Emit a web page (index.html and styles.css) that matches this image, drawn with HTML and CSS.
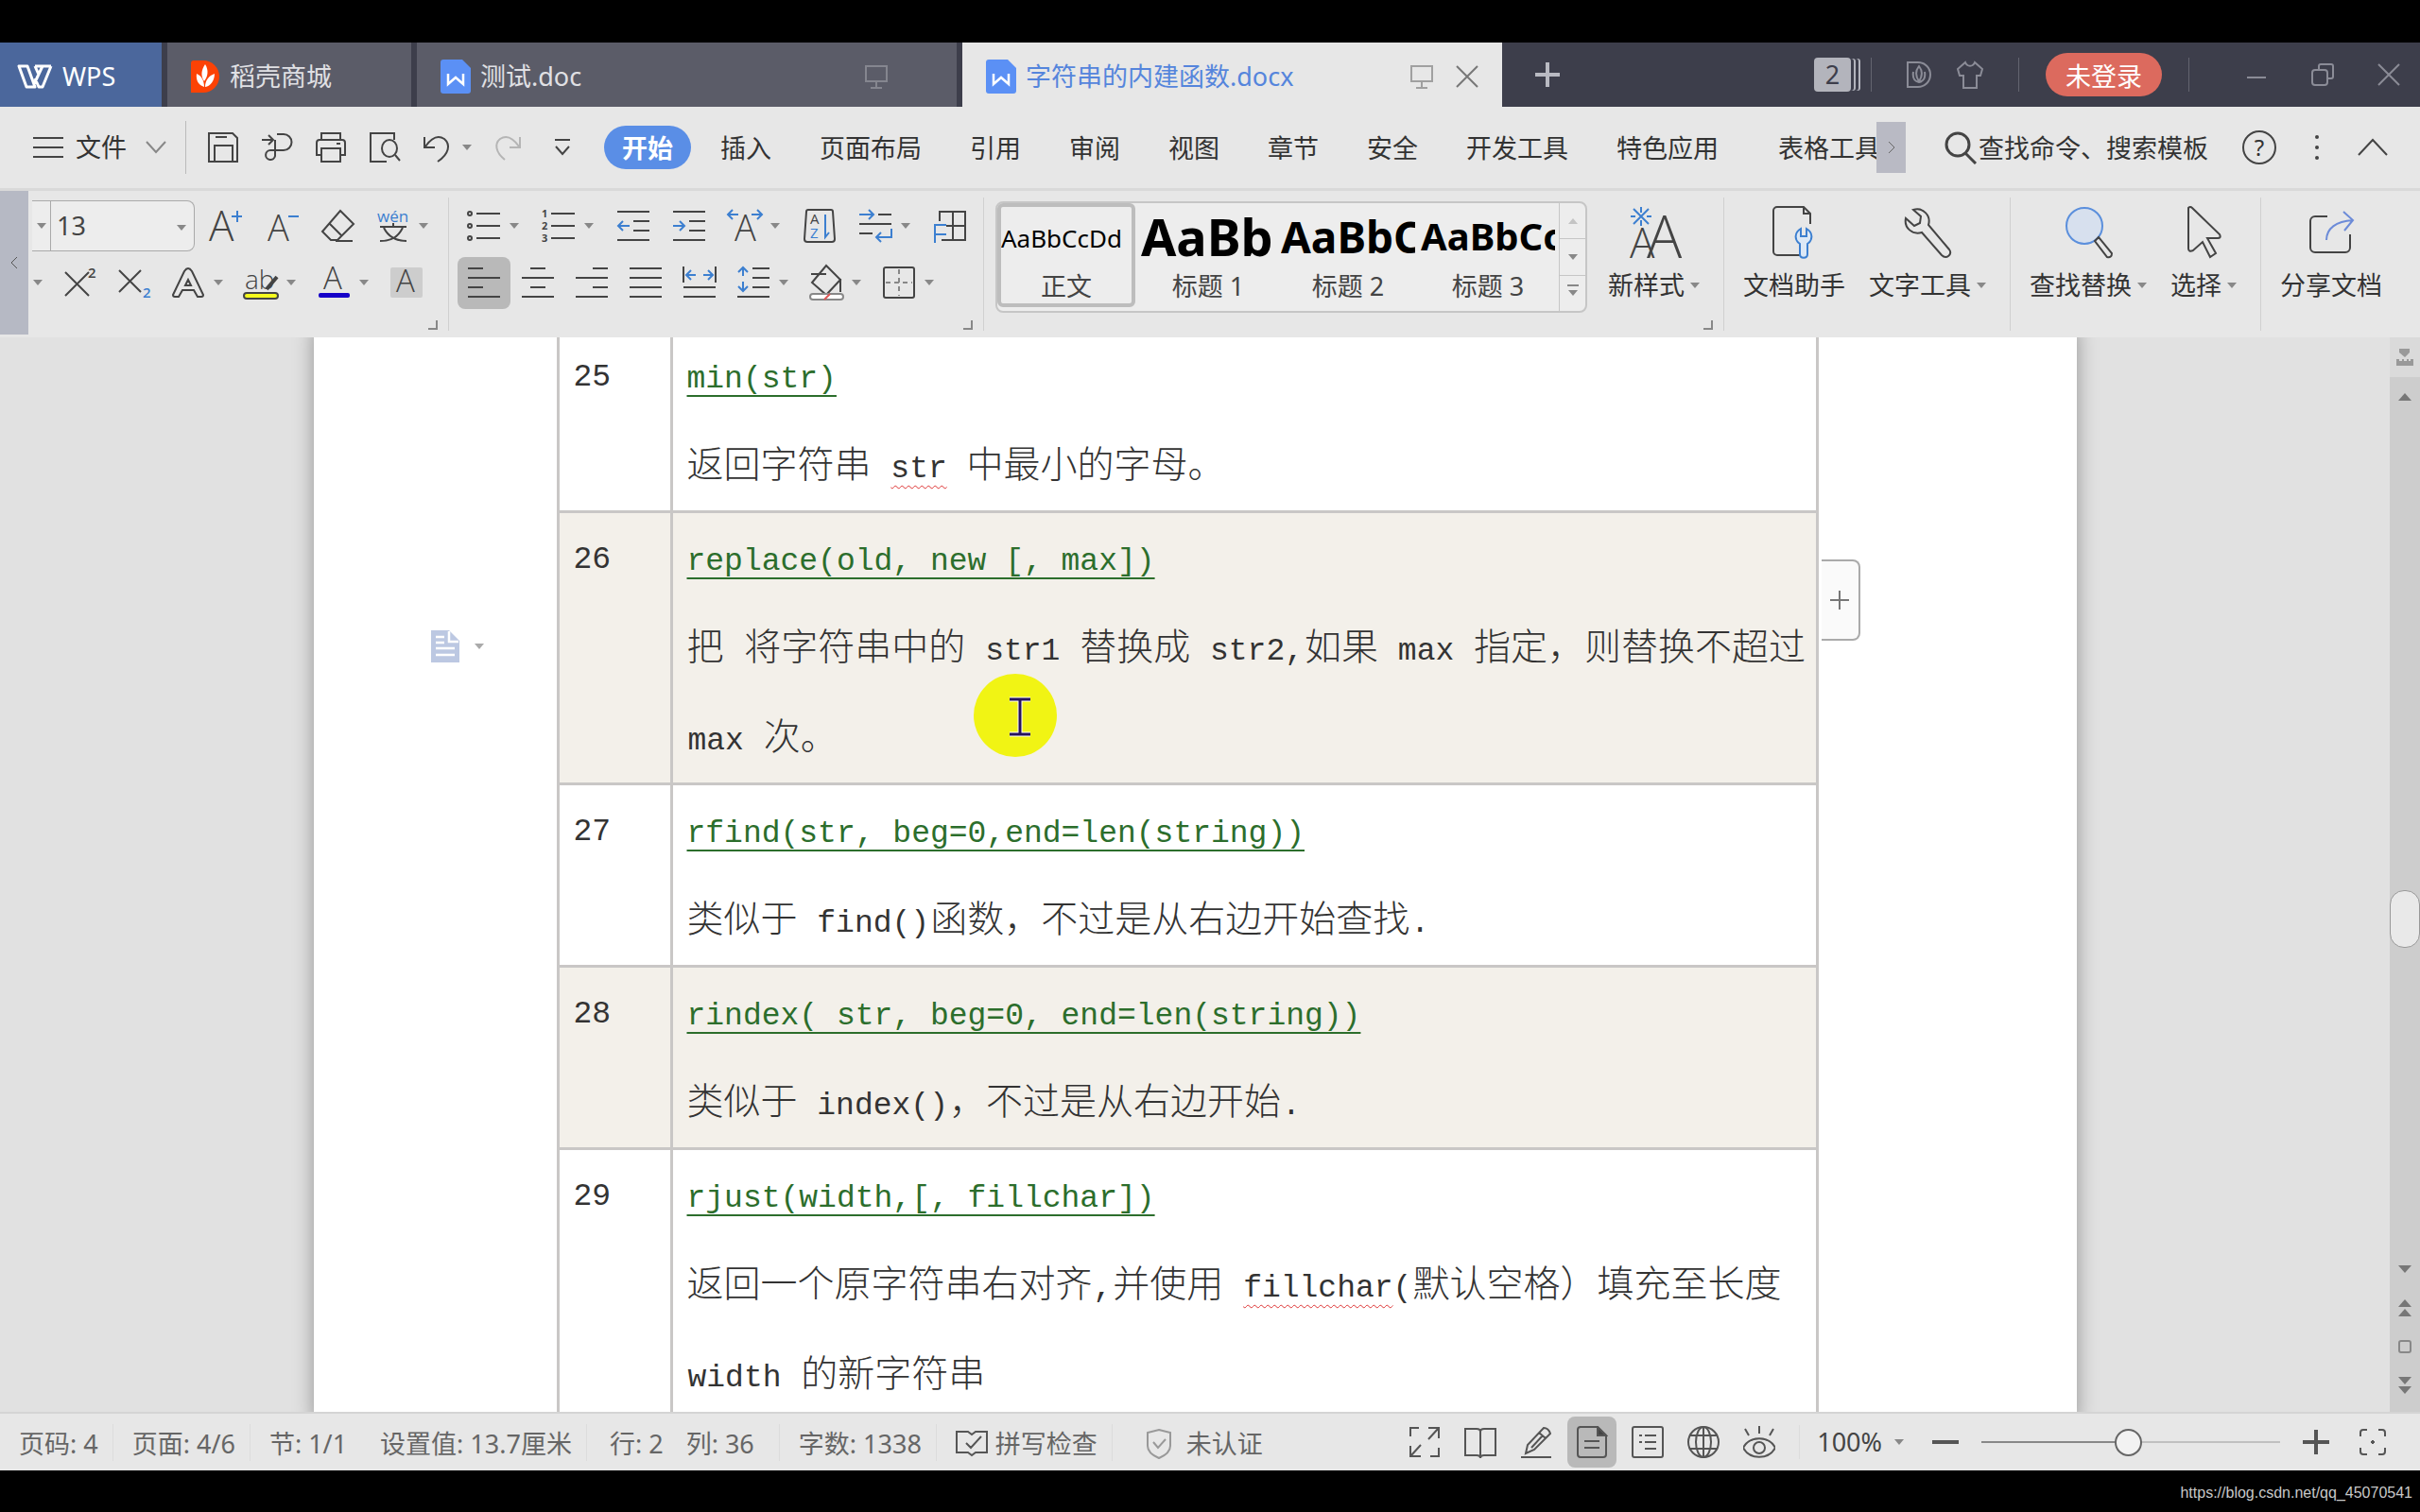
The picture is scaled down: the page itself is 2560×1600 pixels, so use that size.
FILE: index.html
```html
<!DOCTYPE html>
<html lang="zh-CN">
<head>
  <meta charset="UTF-8">
  <title>字符串的内建函数.docx - WPS</title>
  <meta name="viewport" content="width=device-width, initial-scale=1.0">
  <link rel="stylesheet" href="styles.css">
</head>
<body>
  <!-- Shared icons -->
  <svg class="defs" width="0" height="0" aria-hidden="true">
    <symbol id="i-doc" viewBox="0 0 32 36">
      <path d="M3 0h20l9 9v24a3 3 0 0 1-3 3H3a3 3 0 0 1-3-3V3a3 3 0 0 1 3-3z" fill="#5b90f5"/>
      <path d="M8 15v11l8-7 8 7V15" fill="none" stroke="#fff" stroke-width="2.5"/>
    </symbol>
    <symbol id="i-screen" viewBox="0 0 26 26">
      <path d="M2 2h22v16H2zM13 18v6M7 25h12" fill="none" stroke="currentColor" stroke-width="2"/>
    </symbol>
    <symbol id="i-close" viewBox="0 0 26 26">
      <path d="M2 2l22 22M24 2L2 24" fill="none" stroke="currentColor" stroke-width="2"/>
    </symbol>
    <symbol id="i-corner" viewBox="0 0 12 12">
      <path d="M1 10h9V1" fill="none" stroke="#888" stroke-width="2"/>
    </symbol>
  </svg>

  <!-- Title bar -->
  <header class="titlebar">
    <button class="tab tab-home">
      <svg width="38" height="26" viewBox="0 0 38 26"><path d="M2 2h9l8 22h-9zM36 2h-9l-9 19M36 2l-9 22h-4l-4-9M19 2h8M19 2l4 9" fill="none" stroke="#fff" stroke-width="3" stroke-linejoin="round"/></svg>
      WPS
    </button>
    <button class="tab tab-store">
      <svg width="31" height="36" viewBox="0 0 31 36"><path d="M0 4a3 3 0 0 1 3-3h10a17 17 0 0 1 0 34H0z" fill="#fc4205"/><path d="M15 5c4 6 3 13-1 18-4-6-3-12 1-18zM6 15c5 2 8 7 8 14-6-2-9-7-8-14zM25 15c0 7-4 13-10 14 0-7 4-12 10-14z" fill="#fff"/></svg>
      稻壳商城
    </button>
    <button class="tab tab-file">
      <svg width="32" height="36"><use href="#i-doc"/></svg>
      测试.doc
      <svg class="screen" width="26" height="26"><use href="#i-screen"/></svg>
    </button>
    <button class="tab tab-file active">
      <svg width="32" height="36"><use href="#i-doc"/></svg>
      字符串的内建函数.docx
      <svg class="screen" width="26" height="26"><use href="#i-screen"/></svg>
      <svg class="tab-close" width="26" height="26"><use href="#i-close"/></svg>
    </button>
    <button class="new-tab" aria-label="新建"><svg width="28" height="28" viewBox="0 0 28 28"><path d="M14 1v26M1 14h26" stroke="#b9bac2" stroke-width="4"/></svg></button>

    <div class="title-right">
      <button class="count">2</button>
      <i class="bar"></i>
      <div class="title-icons">
        <button aria-label="稻壳"><svg width="30" height="30" viewBox="0 0 30 30" fill="none" stroke="#8b8c97" stroke-width="2"><path d="M3 2h11a13 13 0 0 1 0 26H3z"/><path d="M15 6c4 5 4 10 0 16-4-6-4-11 0-16zM9 12c-1 6 1 10 6 11 5-1 7-5 6-11"/></svg></button>
        <button aria-label="皮肤"><svg width="30" height="30" viewBox="0 0 30 30" fill="none" stroke="#8b8c97" stroke-width="2"><path d="M10 2c2 5 8 5 10 0l8 7-2 7h-4v13H8V16H4L2 9z"/></svg></button>
      </div>
      <i class="bar"></i>
      <button class="login">未登录</button>
      <i class="bar"></i>
      <div class="window-controls">
        <button aria-label="最小化"><svg width="26" height="26" viewBox="0 0 26 26"><path d="M3 16h20" stroke="#8b8c97" stroke-width="2"/></svg></button>
        <button aria-label="还原"><svg width="26" height="26" viewBox="0 0 26 26" fill="none" stroke="#8b8c97" stroke-width="2"><rect x="2" y="8" width="16" height="16" rx="3"/><path d="M9 8V4a2 2 0 0 1 2-2h11a2 2 0 0 1 2 2v11a2 2 0 0 1-2 2h-4"/></svg></button>
        <button aria-label="关闭"><svg width="26" height="26"><use href="#i-close"/></svg></button>
      </div>
    </div>
  </header>

  <!-- Menu bar -->
  <nav class="menubar">
    <button class="file-menu">
      <svg width="34" height="26" viewBox="0 0 34 26"><path d="M1 3h32M1 13h32M1 23h32" stroke="#444" stroke-width="2"/></svg>
      文件
      <svg class="chev" width="22" height="14" viewBox="0 0 22 14"><path d="M1 1l10 11L21 1" fill="none" stroke="#888" stroke-width="2"/></svg>
    </button>
    <div class="quick">
      <button aria-label="保存"><svg width="34" height="34" viewBox="0 0 34 34"><path d="M2 2h25l5 5v25H2zM9 6h12M8 32V15h19v17"/></svg></button>
      <button aria-label="输出为PDF"><svg width="34" height="34" viewBox="0 0 34 34"><path d="M1 9h12M8 4l5 5-5 5M17 3h7a7 7 0 0 1 0 17H10a5 5 0 1 0 5 6V9"/></svg></button>
      <button aria-label="打印"><svg width="34" height="34" viewBox="0 0 34 34"><path d="M7 9V2h20v7M7 25H2V12a3 3 0 0 1 3-3h24a3 3 0 0 1 3 3v13h-5M7 18h20v14H7zM23 13h4"/></svg></button>
      <button aria-label="打印预览"><svg width="34" height="34" viewBox="0 0 34 34"><path d="M27 9V2H2v30h17M28 25l5 6"/><ellipse cx="22" cy="18" rx="8" ry="9"/></svg></button>
      <button class="with-caret" aria-label="撤销"><svg width="30" height="34" viewBox="0 0 30 34"><path d="M2 6v11h11M3 16C10 6 17 4 23 8c7 6 5 16-7 24"/></svg><span class="caret"></span></button>
      <button class="redo" aria-label="恢复"><svg width="30" height="34" viewBox="0 0 30 34"><path d="M28 6v11H17M27 16C20 6 13 4 7 8c-6 5-5 14 5 22"/></svg></button>
      <button class="more" aria-label="自定义"><svg width="20" height="20" viewBox="0 0 20 20"><path d="M2 2h16M3 9l7 8 7-8"/></svg></button>
    </div>
    <div class="menus">
      <button class="current">开始</button>
      <button>插入</button>
      <button>页面布局</button>
      <button>引用</button>
      <button>审阅</button>
      <button>视图</button>
      <button>章节</button>
      <button>安全</button>
      <button>开发工具</button>
      <button>特色应用</button>
      <button class="cut">表格工具</button>
    </div>
    <button class="menu-scroll" aria-label="更多"><svg width="8" height="14" viewBox="0 0 8 14"><path d="M1 1l6 6-6 6" fill="none" stroke="#666"/></svg></button>
    <label class="search">
      <svg width="36" height="36" viewBox="0 0 36 36"><circle cx="14" cy="15" r="12" fill="none" stroke="#444" stroke-width="3"/><path d="M22 24l11 11" stroke="#444" stroke-width="3"/></svg>
      <input type="text" placeholder="查找命令、搜索模板" aria-label="查找命令、搜索模板">
    </label>
    <div class="menu-end">
      <button class="help" aria-label="帮助">?</button>
      <button aria-label="更多选项"><svg width="8" height="30" viewBox="0 0 8 30" fill="#444"><circle cx="4" cy="4" r="2"/><circle cx="4" cy="15" r="2"/><circle cx="4" cy="26" r="2"/></svg></button>
      <button aria-label="折叠功能区"><svg width="32" height="20" viewBox="0 0 32 20"><path d="M1 18L16 2l15 16" fill="none" stroke="#444" stroke-width="2"/></svg></button>
    </div>
  </nav>

  <!-- Ribbon -->
  <section class="ribbon">
    <button class="ribbon-scroll" aria-label="向左"><svg width="8" height="14" viewBox="0 0 8 14"><path d="M7 1L1 7l6 6" fill="none" stroke="#555"/></svg></button>

    <div class="group font-group">
      <div class="tools-row">
        <div class="combo">
          <button class="combo-tail" aria-label="字体"><span class="caret"></span></button>
          <select aria-label="字号"><option>13</option></select>
          <span class="caret"></span>
        </div>
        <button class="tool" aria-label="增大字号"><svg viewBox="0 0 36 36"><text x="0" y="34" class="a-big">A</text><path class="blue" d="M24 8h11M30 2v12"/></svg></button>
        <button class="tool" aria-label="减小字号"><svg viewBox="0 0 36 36"><text x="3" y="34" class="a-mid">A</text><path class="blue" d="M25 8h11"/></svg></button>
        <button class="tool" aria-label="清除格式"><svg viewBox="0 0 36 36"><path d="M21 2l14 14-17 17h-7l-9-9zM9 15l14 14M16 34h18"/></svg></button>
        <button class="tool split" aria-label="拼音指南"><svg viewBox="0 0 36 36"><text x="1" y="14" class="wen">wén</text><path d="M4 19h28M18 15v4M8 20c5 10 13 14 24 14M28 20C23 30 16 34 4 34"/></svg><span class="caret"></span></button>
      </div>
      <div class="tools-row tight">
        <span class="caret lone"></span>
        <button class="tool" aria-label="上标"><svg viewBox="0 0 36 36"><path d="M2 7l25 25M27 7L2 32"/><text x="26" y="13" class="num">2</text></svg></button>
        <button class="tool" aria-label="下标"><svg viewBox="0 0 36 36"><path d="M2 5l23 23M25 5L2 28"/><text x="27" y="34" class="num blue-t">2</text></svg></button>
        <button class="tool split" aria-label="文字效果"><svg viewBox="0 0 36 36"><path d="M14 6q4-6 8 0l12 25q0 2-2 2h-4l-4-7H12l-4 7H4q-2 0-2-2zM18 15l-3 6h6z"/></svg><span class="caret"></span></button>
        <button class="tool split" aria-label="突出显示"><svg viewBox="0 0 36 36"><text x="1" y="25" class="ab">ab</text><path d="M35 12L24 25" stroke-width="4"/><rect x="0" y="29" width="36" height="6" rx="3" fill="#f5fb1e"/></svg><span class="caret"></span></button>
        <button class="tool split" aria-label="字体颜色"><svg viewBox="0 0 36 36"><text x="7" y="25" class="a-sm">A</text><rect x="2" y="29" width="33" height="5" rx="2" fill="#1500c8" stroke="none"/></svg><span class="caret"></span></button>
        <button class="tool" aria-label="字符底纹"><svg viewBox="0 0 36 36"><rect x="1" y="2" width="34" height="32" rx="2" fill="#cdcdcd" stroke="none"/><text x="7" y="28" class="a-sm">A</text></svg></button>
      </div>
      <svg class="corner" width="12" height="12"><use href="#i-corner"/></svg>
    </div>

    <div class="group para-group">
      <div class="tools-row">
        <button class="tool split" aria-label="项目符号"><svg viewBox="0 0 36 36"><path d="M10 5h25M10 18h25M10 31h25"/><circle cx="3" cy="5" r="2"/><circle cx="3" cy="18" r="2"/><circle cx="3" cy="31" r="2"/></svg><span class="caret"></span></button>
        <button class="tool split" aria-label="编号"><svg viewBox="0 0 36 36"><path d="M10 5h25M10 18h25M10 31h25"/><text x="0" y="9" class="tiny">1</text><text x="0" y="22" class="tiny">2</text><text x="0" y="35" class="tiny">3</text></svg><span class="caret"></span></button>
        <button class="tool" aria-label="减少缩进"><svg viewBox="0 0 36 36"><path d="M1 3h34M18 13h17M18 23h17M1 33h34"/><path class="blue" d="M2 18h12M7 13l-5 5 5 5"/></svg></button>
        <button class="tool" aria-label="增加缩进"><svg viewBox="0 0 36 36"><path d="M1 3h34M18 13h17M18 23h17M1 33h34"/><path class="blue" d="M1 18h12M8 13l5 5-5 5"/></svg></button>
        <button class="tool split" aria-label="中文版式"><svg viewBox="0 0 36 36"><text x="7" y="34" class="a-mid">A</text><path class="blue" d="M0 6h11M5 1L0 6l5 5M25 6h11M31 1l5 5-5 5"/></svg><span class="caret"></span></button>
        <button class="tool" aria-label="排序"><svg viewBox="0 0 36 36"><path d="M6 1h24a2 2 0 0 1 2 2l2 29a3 3 0 0 1-3 3H5a3 3 0 0 1-3-3L4 3a2 2 0 0 1 2-2z"/><text x="8" y="16" class="az">A</text><text x="8" y="31" class="az blue-t">Z</text><path class="blue" d="M24 6v24l4-5"/></svg></button>
        <button class="tool split" aria-label="编辑标记"><svg viewBox="0 0 36 36"><path d="M21 6h14M1 16h34M1 26h14"/><path class="blue" d="M1 6h14M11 1l5 5-5 5M35 21v9H19M24 25l-5 5 5 5"/></svg><span class="caret"></span></button>
        <button class="tool" aria-label="制表位"><svg viewBox="0 0 36 36"><path d="M7 13V3h27v30H9M21 3v30M14 18h20"/><path class="blue" d="M2 36V17h12M2 27h12"/></svg></button>
      </div>
      <div class="tools-row tight">
        <button class="tool pressed" aria-label="左对齐"><svg viewBox="0 0 36 36"><path d="M1 3h16M1 13h34M1 23h16M1 33h34"/></svg></button>
        <button class="tool" aria-label="居中"><svg viewBox="0 0 36 36"><path d="M10 3h16M1 13h34M10 23h16M1 33h34"/></svg></button>
        <button class="tool" aria-label="右对齐"><svg viewBox="0 0 36 36"><path d="M19 3h16M1 13h34M19 23h16M1 33h34"/></svg></button>
        <button class="tool" aria-label="两端对齐"><svg viewBox="0 0 36 36"><path d="M1 3h34M1 13h34M1 23h34M1 33h34"/></svg></button>
        <button class="tool" aria-label="分散对齐"><svg viewBox="0 0 36 36"><path d="M1 1v17M35 1v17M1 23h34M1 33h34"/><path class="blue" d="M4 10h10M9 5l-5 5 5 5M22 10h10M27 5l5 5-5 5"/></svg></button>
        <button class="tool split" aria-label="行距"><svg viewBox="0 0 36 36"><path d="M17 3h18M17 13h18M17 23h18M1 33h34"/><path class="blue" d="M7 11V2M2 7l5-5 5 5M7 17v10M2 22l5 5 5-5"/></svg><span class="caret"></span></button>
        <button class="tool split" aria-label="底纹颜色"><svg viewBox="0 0 36 36"><path d="M18 0l15 15-15 16L3 18zM2 9h16M33 14v14"/><rect x="1" y="30" width="35" height="6" rx="3" fill="#fff" stroke="#888"/><path d="M16 36l6-6" stroke="#d55"/></svg><span class="caret"></span></button>
        <button class="tool split" aria-label="边框"><svg viewBox="0 0 36 36"><rect x="2" y="2" width="32" height="32" rx="2"/><path d="M18 4v28M4 18h28" stroke-dasharray="5 4" stroke="#888"/></svg><span class="caret"></span></button>
      </div>
      <svg class="corner" width="12" height="12"><use href="#i-corner"/></svg>
    </div>

    <div class="group style-group">
      <div class="gallery">
        <button class="style chosen"><span class="sample">AaBbCcDd</span><span>正文</span></button>
        <button class="style"><span class="sample h1">AaBb</span><span>标题 1</span></button>
        <button class="style"><span class="sample h2">AaBbC</span><span>标题 2</span></button>
        <button class="style"><span class="sample h3">AaBbCc</span><span>标题 3</span></button>
        <div class="gallery-scroll">
          <button aria-label="上一行"><span class="caret up faint"></span></button>
          <button aria-label="下一行"><span class="caret"></span></button>
          <button aria-label="展开"><span class="caret lined"></span></button>
        </div>
      </div>
      <button class="big new-style">
        <svg viewBox="0 0 56 56"><g class="blue"><path d="M14 1v6M14 15v6M3 11h5M20 11h5M6 3l16 16M22 3L6 19"/></g><text x="2" y="55" class="a-w1">A</text><text x="20" y="55" class="a-w2">A</text></svg>
        <span>新样式<i class="caret"></i></span>
      </button>
      <svg class="corner" width="12" height="12"><use href="#i-corner"/></svg>
    </div>

    <div class="group big-group">
      <button class="big">
        <svg viewBox="0 0 56 56"><path d="M34 52H10a4 4 0 0 1-4-4V5a4 4 0 0 1 4-4h28l7 7v11M38 1v7h7"/><path class="blue soft" d="M35 24c-7 4-7 12-1 16v11c0 5 8 5 8 0V40c6-4 6-12-1-16v8h-6z"/></svg>
        <span>文档助手</span>
      </button>
      <button class="big">
        <svg viewBox="0 0 56 56"><path d="M13 4c10-3 19 6 16 16l22 26c4 5-3 11-8 6L22 28C12 31 3 23 5 13l9 8 6-3 1-7z"/></svg>
        <span>文字工具<i class="caret"></i></span>
      </button>
    </div>

    <div class="group big-group">
      <button class="big">
        <svg viewBox="0 0 56 56"><circle cx="24" cy="21" r="19" fill="#d7e0ee" stroke="#5b8fdc"/><path d="M35 37l4-4 14 17q0 5-5 4z"/></svg>
        <span>查找替换<i class="caret"></i></span>
      </button>
      <button class="big">
        <svg viewBox="0 0 56 56"><path d="M12 2q2-2 4 0l29 28q2 4-2 4H32l9 16-6 4-8-16-10 9q-5 2-5-2z"/></svg>
        <span>选择<i class="caret"></i></span>
      </button>
    </div>

    <div class="group big-group last">
      <button class="big">
        <svg viewBox="0 0 56 56"><path d="M24 11H11a5 5 0 0 0-5 5v28a5 5 0 0 0 5 5h32a5 5 0 0 0 5-5V30"/><path class="indigo" d="M23 36c0-12 10-20 28-21M41 6l10 9-9 11"/></svg>
        <span>分享文档</span>
      </button>
    </div>
  </section>

  <!-- Document -->
  <main class="workspace">
    <div class="canvas">
      <article class="page">
        <table class="functions">
          <tbody>
            <tr>
              <td class="no">25</td>
              <td>
                <p><a href="#min">min(str)</a></p>
                <p>返回字符串<code> <u>str</u> </code>中最小的字母。</p>
              </td>
            </tr>
            <tr class="shade">
              <td class="no">26</td>
              <td>
                <p><a href="#replace">replace(old, new [, max])</a></p>
                <p>把<code> </code>将字符串中的<code> str1 </code>替换成<code> str2,</code>如果<code> max </code>指定，则替换不超过</p>
                <p><code>max </code>次。</p>
              </td>
            </tr>
            <tr>
              <td class="no">27</td>
              <td>
                <p><a href="#rfind">rfind(str, beg=0,end=len(string))</a></p>
                <p>类似于<code> find()</code>函数，不过是从右边开始查找<code>.</code></p>
              </td>
            </tr>
            <tr class="shade">
              <td class="no">28</td>
              <td>
                <p><a href="#rindex">rindex( str, beg=0, end=len(string))</a></p>
                <p>类似于<code> index()</code>，不过是从右边开始<code>.</code></p>
              </td>
            </tr>
            <tr>
              <td class="no">29</td>
              <td>
                <p><a href="#rjust">rjust(width,[, fillchar])</a></p>
                <p>返回一个原字符串右对齐<code>,</code>并使用<code> <u>fillchar</u>(</code>默认空格）填充至长度</p>
                <p><code>width </code>的新字符串</p>
              </td>
            </tr>
          </tbody>
        </table>
        <button class="para-mark" aria-label="段落布局">
          <svg width="30" height="34" viewBox="0 0 30 34"><path d="M0 0h19l11 11v23H0z" fill="#bcc8e2"/><path d="M5 7h9M5 13h9M5 19h20M5 26h20M19 1v11h10" fill="none" stroke="#fff" stroke-width="2.5"/></svg>
          <span class="caret"></span>
        </button>
        <button class="add-col" aria-label="添加列"><svg width="20" height="20" viewBox="0 0 20 20"><path d="M10 0v20M0 10h20" stroke="#777" stroke-width="2"/></svg></button>
        <svg class="pointer" width="88" height="88" viewBox="0 0 88 88"><circle cx="44" cy="44" r="44" fill="#f1f414"/><path d="M38 27h22M38 64h22M49 27v37" fill="none" stroke="#fff" stroke-width="5"/><path d="M38 27h22M38 64h22M49 27v37" fill="none" stroke="#26135c" stroke-width="3"/></svg>
      </article>
    </div>
    <div class="scrollbar">
      <button class="ruler" aria-label="标尺"><svg width="18" height="18" viewBox="0 0 18 18" fill="#999"><path d="M3 0h11v4l-5 5-6-5zM0 11h3v2h3v-2h2v2h3v-2h2v2h2v-2h3v7H0z"/></svg></button>
      <button aria-label="向上"><span class="caret up"></span></button>
      <div class="track"><div class="thumb"></div></div>
      <button aria-label="向下"><span class="caret"></span></button>
      <button aria-label="上一页"><span class="caret up"></span><span class="caret up"></span></button>
      <button aria-label="选择浏览对象"><span class="square"></span></button>
      <button aria-label="下一页"><span class="caret"></span><span class="caret"></span></button>
    </div>
  </main>

  <!-- Status bar -->
  <footer class="status">
    <span class="cell line">页码: 4</span>
    <span class="cell line">页面: 4/6</span>
    <span class="cell">节: 1/1</span>
    <span class="cell line">设置值: 13.7厘米</span>
    <span class="cell pos">行: 2</span>
    <span class="cell pos line">列: 36</span>
    <span class="cell line">字数: 1338</span>
    <button class="cell line"><svg width="34" height="30" viewBox="0 0 34 30"><path d="M17 27l-4-3H1V2h12l4 3 4-3h12v22H21zM11 14l5 5L27 7"/></svg>拼写检查</button>
    <button class="cell auth"><svg width="30" height="34" viewBox="0 0 30 34"><path d="M15 2l12 3v14c0 6-5 10-12 13C8 29 3 25 3 19V5zM9 15l5 6 8-9"/></svg>未认证</button>
    <div class="views">
      <button aria-label="全屏"><svg viewBox="0 0 34 34"><path d="M2 11V2h9M32 23v9h-9M21 2h11v11M32 2L21 14M2 21v11h11M2 32l11-12"/></svg></button>
      <button aria-label="阅读"><svg viewBox="0 0 34 34"><path d="M1 3h12q4 0 4 3 0-3 4-3h12v28H21q-4 0-4 3 0-3-4-3H1zM17 6v27"/></svg></button>
      <button aria-label="写作"><svg viewBox="0 0 34 34"><path d="M25 2q5 0 7 6L15 25l-9 4 2-9zM20 7l7 6M24 10L12 23M1 33h32"/></svg></button>
      <button class="on" aria-label="页面视图"><svg viewBox="0 0 34 34"><path d="M4 1h19l9 9v20a3 3 0 0 1-3 3H5a3 3 0 0 1-3-3V4a3 3 0 0 1 3-3M9 16h16M9 23h16"/><path d="M23 1v9h9z" fill="#444"/></svg></button>
      <button aria-label="大纲"><svg viewBox="0 0 34 34"><rect x="1" y="1" width="32" height="32" rx="2"/><path d="M8 10h3M14 10h12M8 17h3M14 17h12M14 24h12"/></svg></button>
      <button aria-label="Web版式"><svg viewBox="0 0 34 34"><circle cx="17" cy="17" r="16"/><ellipse cx="17" cy="17" rx="8" ry="16"/><path d="M17 1v32M3 10h28M3 24h28"/></svg></button>
      <button aria-label="护眼模式"><svg viewBox="0 0 34 34"><path d="M0 23c7-13 27-13 34 0-7 13-27 13-34 0zM17 0v8M2 3l4 7M32 3l-4 7"/><circle cx="17" cy="23" r="6"/></svg></button>
    </div>
    <div class="zoom">
      <button class="percent">100%<span class="caret"></span></button>
      <button aria-label="缩小"><svg width="28" height="28" viewBox="0 0 28 28"><path d="M0 14h28" stroke-width="4"/></svg></button>
      <input type="range" min="0" max="100" value="49" aria-label="显示比例">
      <button aria-label="放大"><svg width="28" height="28" viewBox="0 0 28 28"><path d="M0 14h28M14 1v26" stroke-width="4"/></svg></button>
      <button class="fit" aria-label="最佳显示比例"><svg width="30" height="30" viewBox="0 0 30 30"><path d="M2 9V5q0-3 3-3h4M21 2h4q3 0 3 3v4M28 21v4q0 3-3 3h-4M9 28H5q-3 0-3-3v-4M15 13v4M13 15h4"/></svg></button>
    </div>
  </footer>
  <div class="credit">https://blog.csdn.net/qq_45070541</div>
</body>
</html>
```
FILE: styles.css
```css
:root {
  --bar-bg: #e7e7e7;
  --title-bg: #3d3e4b;
  --tab-bg: #5b5c68;
  --blue: #3c7fd0;
  --text: #333;
  --line: #dcdcdc;
}
* {
  box-sizing: border-box;
}
body {
  margin: 0;
  padding-top: 45px;
  height: 100vh;
  display: flex;
  flex-direction: column;
  overflow: hidden;
  background: #000;
  color: var(--text);
  font-family: "Noto Sans", "Noto Sans CJK SC", sans-serif;
  font-size: 27px;
  line-height: 36px;
}
button, input, select {
  margin: 0;
  padding: 0;
  border: none;
  background: none;
  color: inherit;
  font: inherit;
}
button {
  display: flex;
  align-items: center;
  justify-content: center;
  flex-shrink: 0;
  white-space: nowrap;
}
svg {
  display: block;
  flex-shrink: 0;
}
.defs {
  position: absolute;
}
.caret {
  display: block;
  flex-shrink: 0;
  border: 5px solid transparent;
  border-top: 6px solid #888;
  border-bottom: none;
}
.caret.up {
  border-top: none;
  border-bottom: 6px solid #777;
}
.caret.faint {
  border-bottom-color: #c4c4c4;
}

/* Title bar */
.titlebar {
  display: flex;
  flex-shrink: 0;
  height: 68px;
  background: var(--title-bg);
}
.tab {
  gap: 10px;
  justify-content: flex-start;
  margin-right: 6px;
  padding-top: 3px;
  background: var(--tab-bg);
  color: #e0e0e4;
}
.tab-home {
  width: 171px;
  padding-left: 18px;
  background: #4b679c;
  color: #fff;
}
.tab-store {
  width: 258px;
  padding-left: 25px;
}
.tab-file {
  width: 571px;
  padding-right: 20px;
  padding-left: 25px;
}
.tab-file .screen {
  margin-left: auto;
  margin-right: 52px;
  color: #85868f;
}
.tab-file.active {
  margin-right: 0;
  background: var(--bar-bg);
  color: #5585dc;
}
.tab-file.active .screen {
  margin-right: 12px;
  color: #a0a0a0;
}
.tab-file.active {
  padding-right: 24px;
}
.tab-close {
  color: #777;
}
.new-tab {
  width: 96px;
}
.title-right {
  display: flex;
  align-items: center;
  margin-left: auto;
  padding-right: 20px;
  color: #8b8c97;
}
.bar {
  width: 1px;
  height: 36px;
  background: #63646f;
}
.count {
  width: 39px;
  height: 36px;
  margin-right: 21px;
  border-radius: 4px;
  background: #b3b4bc;
  box-shadow: 4px 0 0 -1px var(--title-bg), 6px 0 0 -1px #b3b4bc, 9px 0 0 -1px var(--title-bg), 11px 0 0 -1px #b3b4bc;
  color: #3d3e4b;
}
.title-icons {
  display: flex;
  gap: 24px;
  padding: 0 36px 0 35px;
}
.login {
  width: 123px;
  height: 46px;
  margin: 0 28px;
  padding-top: 3px;
  border-radius: 23px;
  background: #dc6a5e;
  color: #fff;
}
.window-controls {
  display: flex;
  gap: 44px;
  padding-left: 58px;
}

/* Menu bar */
.menubar {
  display: flex;
  align-items: center;
  flex-shrink: 0;
  height: 89px;
  padding: 0 34px;
  border-bottom: 3px solid #d9d9d9;
  background: var(--bar-bg);
}
.file-menu {
  gap: 12px;
  height: 56px;
  padding-right: 20px;
  border-right: 1px solid #bbb;
}
.file-menu .chev {
  margin-left: 8px;
}
.quick {
  display: flex;
  align-items: center;
  gap: 23px;
  padding: 0 34px 0 22px;
}
.quick svg {
  fill: none;
  stroke: #444;
  stroke-width: 2;
}
.quick .with-caret {
  gap: 12px;
}
.quick .redo svg {
  stroke: #b5b5b5;
}
.quick .more {
  padding-left: 10px;
}
.menus {
  display: flex;
  flex: 1 1 0;
  align-items: center;
  gap: 51px;
  min-width: 0;
  overflow: hidden;
}
.menus button {
  padding-top: 2px;
}
.menus .current {
  width: 92px;
  height: 46px;
  margin-right: -20px;
  border-radius: 23px;
  background: #5a8ee6;
  color: #fff;
  font-weight: bold;
}
.menus .cut {
  margin-left: 12px;
}
.menu-scroll {
  width: 31px;
  height: 54px;
  background: #b9bac4;
}
.search {
  display: flex;
  align-items: center;
  padding-left: 41px;
}
.search input {
  width: 248px;
  padding-top: 2px;
  outline: none;
}
.search input::placeholder {
  color: var(--text);
  opacity: 1;
}
.menu-end {
  display: flex;
  align-items: center;
  gap: 39px;
  padding-left: 31px;
}
.help {
  width: 36px;
  height: 36px;
  border: 2px solid #444;
  border-radius: 50%;
  font-size: 24px;
}

/* Ribbon */
.ribbon {
  display: flex;
  flex-shrink: 0;
  height: 155px;
  background: var(--bar-bg);
}
.ribbon-scroll {
  width: 30px;
  margin-bottom: 3px;
  background: #b6b9c4;
}
.group {
  position: relative;
  margin: 7px 0;
  border-right: 1px solid #d0d0d0;
}
.corner {
  position: absolute;
  right: 10px;
  bottom: 0;
}
.font-group {
  width: 445px;
}
.para-group {
  width: 566px;
  padding-left: 9px;
}
.tools-row {
  display: flex;
  align-items: center;
  gap: 3px;
  height: 60px;
}
.tools-row.tight {
  gap: 1px;
}
.tool {
  width: 56px;
  height: 55px;
}
.tool.split {
  width: 76px;
  justify-content: flex-start;
  gap: 9px;
  padding-left: 10px;
}
.tool.pressed {
  border-radius: 8px;
  background: #b9b9b9;
}
.tool svg {
  width: 36px;
  height: 36px;
  overflow: visible;
  fill: none;
  stroke: #444;
  stroke-width: 2;
}
svg .blue {
  stroke: var(--blue);
}
svg text {
  fill: #444;
  stroke: none;
  font-family: "Open Sans", sans-serif;
  font-weight: 300;
}
svg .a-big { font-size: 44px; }
svg .a-mid { font-size: 38px; }
svg .a-sm { font-size: 33px; }
svg .wen { fill: var(--blue); font-size: 17px; font-weight: 400; }
svg .num { font-size: 15px; font-weight: 600; }
svg .ab { font-size: 28px; }
svg .tiny { font-size: 11px; font-weight: 700; }
svg .az { font-size: 15px; font-weight: 400; }
svg .a-w1 { font-size: 44px; }
svg .a-w2 { font-size: 62px; }
svg .blue-t { fill: var(--blue); }
.caret.lone {
  margin: 0 11px 0 5px;
}
.combo {
  position: relative;
  display: flex;
  width: 172px;
  height: 54px;
  margin: 0 2px 0 4px;
  border: 1px solid #a9a9a9;
  border-left: none;
  border-radius: 0 8px 8px 0;
  background: #ededed;
}
.combo-tail {
  width: 20px;
  border-right: 1px solid #a9a9a9;
}
.combo select {
  flex: 1;
  padding-left: 6px;
  appearance: none;
  color: #444;
}
.combo > .caret {
  position: absolute;
  right: 8px;
  top: 25px;
}
.style-group {
  display: flex;
  width: 783px;
  padding: 4px 0 0 12px;
}
.gallery {
  display: flex;
  width: 626px;
  height: 118px;
  border: 2px solid #c6c6c6;
  border-radius: 8px;
  background: #ededed;
}
.style {
  display: flex;
  flex-direction: column;
  justify-content: flex-start;
  width: 142px;
  height: 110px;
  margin-left: 6px;
  color: #444;
}
.style.chosen {
  width: 146px;
  margin-left: 0;
  border: 4px solid #bdbdbd;
  border-radius: 6px;
}
.style .sample {
  width: 100%;
  height: 70px;
  overflow: hidden;
  color: #000;
  line-height: 70px;
  text-align: left;
}
.style.chosen .sample {
  height: 66px;
  font-size: 26px;
  line-height: 66px;
}
.style .h1,
.style .h2,
.style .h3 {
  font-weight: bold;
}
.style .h1 { font-size: 54px; }
.style .h2 { font-size: 46px; }
.style .h3 { font-size: 40px; }
.gallery-scroll {
  display: flex;
  flex-direction: column;
  width: 28px;
  margin-left: auto;
  border-left: 1px solid #c6c6c6;
}
.gallery-scroll button {
  flex: 1;
}
.gallery-scroll button + button {
  border-top: 1px solid #c6c6c6;
}
.caret.lined {
  position: relative;
}
.caret.lined::before {
  content: "";
  position: absolute;
  left: -6px;
  top: -12px;
  width: 12px;
  height: 2px;
  background: #888;
}
.big {
  flex-direction: column;
  justify-content: flex-start;
  gap: 10px;
  padding-top: 9px;
}
.big svg {
  width: 56px;
  height: 56px;
  overflow: visible;
  fill: none;
  stroke: #444;
  stroke-width: 2;
}
.big .soft {
  fill: #dce8f6;
}
.big .indigo {
  stroke: #6c8bd8;
}
.big span {
  display: flex;
  align-items: center;
  gap: 6px;
}
.new-style {
  padding-top: 5px;
  margin-left: 22px;
}
.big-group {
  display: flex;
  gap: 25px;
  padding: 0 25px 0 20px;
}
.big-group.last {
  border-right: none;
}

/* Document */
.workspace {
  display: flex;
  flex: 1;
  min-height: 0;
  background: #e1e1e1;
}
.canvas {
  flex: 1;
  min-width: 0;
  overflow: hidden;
}
.page {
  position: relative;
  width: 1865px;
  max-width: 100%;
  margin: -10px auto 0;
  padding: 0 273px 0 257px;
  background: #fff;
  box-shadow: 0 0 20px rgba(0, 0, 0, 0.35);
}
.functions {
  width: 100%;
  border-collapse: collapse;
  font-family: "Noto Sans CJK SC", sans-serif;
  font-size: 39px;
  font-weight: 300;
}
.functions td {
  padding: 0 0 0 15px;
  border: 3px solid #c9c7c6;
  vertical-align: top;
}
.functions .no {
  width: 120px;
  line-height: 99px;
}
.functions p {
  height: 95px;
  margin: 0;
  line-height: 87px;
  white-space: pre;
}
.functions code,
.functions a,
.functions .no {
  font-family: "Liberation Mono", monospace;
  font-size: 33px;
  font-weight: 400;
}
.functions code {
  margin: 0 1px;
}
.functions a {
  color: #2c6e2c;
  text-decoration: underline 2px;
  text-decoration-skip-ink: none;
  text-underline-offset: 8px;
}
.functions u {
  text-decoration: underline wavy #d33 1px;
  text-underline-offset: 8px;
}
.functions .shade {
  background: #f3f0ea;
}
.para-mark {
  position: absolute;
  left: 124px;
  top: 320px;
  gap: 16px;
}
.para-mark .caret {
  border-top-color: #aaa;
}
.add-col {
  position: absolute;
  right: 229px;
  top: 245px;
  width: 41px;
  height: 86px;
  border: 2px solid #aaa;
  border-left: none;
  border-radius: 0 8px 8px 0;
  background: #fafafa;
}
.pointer {
  position: absolute;
  left: 698px;
  top: 366px;
}
.scrollbar {
  display: flex;
  flex-direction: column;
  width: 32px;
  padding-bottom: 8px;
  background: #cdcdcd;
}
.scrollbar button {
  flex-direction: column;
  height: 41px;
  gap: 2px;
}
.scrollbar .ruler {
  height: 42px;
  background: #dadada;
}
.scrollbar .caret {
  border-width: 8px 7px 0;
  border-top-color: #777;
}
.scrollbar .caret.up {
  border-width: 0 7px 8px;
}
.track {
  flex: 1;
  padding-top: 502px;
}
.thumb {
  height: 61px;
  border: 1px solid #999;
  border-radius: 15px;
  background: #e9e9e9;
}
.square {
  width: 14px;
  height: 14px;
  border: 2px solid #888;
  border-radius: 3px;
}

/* Status bar */
.status {
  display: flex;
  align-items: center;
  flex-shrink: 0;
  height: 62px;
  padding-right: 35px;
  border-top: 2px solid #d4d4d4;
  background: var(--bar-bg);
  color: #666;
}
.status svg {
  fill: none;
  stroke: #555;
  stroke-width: 2;
}
.cell {
  flex-shrink: 0;
  gap: 8px;
  padding: 3px 15px 0 20px;
  white-space: nowrap;
}
.cell.line {
  border-right: 1px solid var(--line);
}
.cell.pos {
  padding-right: 0;
  padding-left: 24px;
}
.cell.pos.line {
  padding-right: 26px;
}
.cell.auth {
  gap: 14px;
  padding-left: 34px;
}
.cell.auth svg {
  stroke: #999;
}
.views {
  display: flex;
  gap: 7px;
  margin-left: auto;
}
.views button {
  width: 52px;
  height: 54px;
  border-radius: 8px;
}
.views .on {
  background: #b9b9b9;
}
.views svg {
  width: 34px;
  height: 34px;
}
.zoom {
  display: flex;
  align-items: center;
  margin-left: 16px;
  padding-left: 18px;
  border-left: 1px solid var(--line);
}
.percent {
  gap: 13px;
  margin-right: 30px;
  color: #444;
}
.zoom input {
  width: 316px;
  height: 34px;
  margin: 0 24px;
  appearance: none;
  background: linear-gradient(to right, #888 50%, #c0c0c0 50%) center / 100% 2px no-repeat;
}
.zoom input::-webkit-slider-thumb {
  appearance: none;
  width: 29px;
  height: 29px;
  border: 2px solid #666;
  border-radius: 50%;
  background: #f2f2f2;
}
.fit {
  margin-left: 31px;
}
.credit {
  height: 44px;
  padding: 2px 8px 0;
  color: #c8c8c8;
  font-family: "Liberation Sans", sans-serif;
  font-size: 16px;
  line-height: 44px;
  text-align: right;
}
```
